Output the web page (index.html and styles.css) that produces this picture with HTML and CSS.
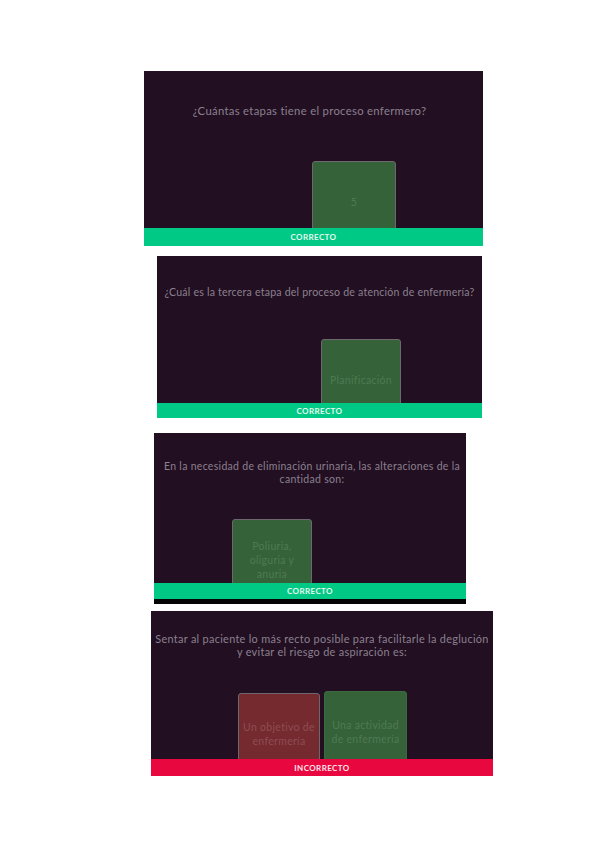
FILE: index.html
```html
<!DOCTYPE html>
<html lang="es">
<head>
<meta charset="utf-8">
<title>Quiz</title>
<link rel="stylesheet" href="styles.css">
</head>
<body>
<main class="page">
  <section class="slide s1">
    <div class="stage">
      <p class="question">¿Cuántas etapas tiene el proceso enfermero?</p>
      <div class="answers">
        <div class="answer ok framed">5</div>
      </div>
    </div>
    <div class="result ok-bar">CORRECTO</div>
  </section>

  <section class="slide s2">
    <div class="stage">
      <p class="question">¿Cuál es la tercera etapa del proceso de atención de enfermería?</p>
      <div class="answers">
        <div class="answer ok framed">Planificación</div>
      </div>
    </div>
    <div class="result ok-bar">CORRECTO</div>
  </section>

  <section class="slide s3">
    <div class="stage">
      <p class="question">En la necesidad de eliminación urinaria, las alteraciones de la<br>cantidad son:</p>
      <div class="answers">
        <div class="answer ok framed">Poliuria,<br>oliguria y<br>anuria</div>
      </div>
    </div>
    <div class="result ok-bar">CORRECTO</div>
    <div class="edge"></div>
  </section>

  <section class="slide s4">
    <div class="stage">
      <p class="question">Sentar al paciente lo más recto posible para facilitarle la deglución<br>y evitar el riesgo de aspiración es:</p>
      <div class="answers">
        <div class="answer bad framed">Un objetivo de<br>enfermería</div>
        <div class="answer ok">Una actividad<br>de enfermería</div>
      </div>
    </div>
    <div class="result bad-bar">INCORRECTO</div>
  </section>
</main>
</body>
</html>
```

FILE: styles.css
```css
* { box-sizing: border-box; }

html, body {
  margin: 0;
  padding: 0;
  background: #ffffff;
}

body {
  font-family: "Lato", "Open Sans", sans-serif;
}

.page {
  display: flex;
  flex-direction: column;
  padding-top: 71px;
}

.slide {
  display: flex;
  flex-direction: column;
  background: #220f21;
}

.stage {
  display: flex;
  flex-direction: column;
  overflow: hidden;
}

.question {
  margin: 0;
  text-align: center;
  white-space: nowrap;
  color: #8b8090;
  font-size: 11px;
  line-height: 13px;
  letter-spacing: 0.3px;
}

.answers {
  display: flex;
  align-items: flex-start;
  gap: 4px;
}

.answer {
  flex: none;
  height: 82px;
  display: flex;
  align-items: center;
  justify-content: center;
  text-align: center;
  white-space: nowrap;
  font-size: 10.5px;
  line-height: 14px;
  letter-spacing: 0.3px;
  border-radius: 3px;
  padding: 0;
}

.answer.ok {
  background: #356238;
  color: #4f7a53;
  border: 1px solid #3b6a3e;
}

.answer.bad {
  background: #742a2f;
  color: #8f4d52;
}

.answer.framed {
  border: 1.5px solid #6e676d;
}

.result {
  flex: none;
  display: flex;
  align-items: center;
  justify-content: center;
  color: #e8f8ef;
  font-weight: 700;
  font-size: 8px;
  letter-spacing: 0.4px;
}

.ok-bar { background: #00c986; }
.bad-bar { background: #e9073f; color: #fde6ec; }

.edge {
  height: 5px;
  background: #050505;
}

/* slide 1 */
.s1 { margin-left: 144px; width: 339px; }
.s1 .stage { height: 157px; padding-top: 33px; }
.s1 .question { font-size: 11.3px; padding-right: 8px; }
.s1 .answers { margin-top: 44px; padding-left: 168px; }
.s1 .answer { width: 84px; }
.s1 .result { height: 18px; }

/* slide 2 */
.s2 { margin-left: 157px; width: 325px; margin-top: 10px; }
.s2 .stage { height: 147px; padding-top: 30px; }
.s2 .question { font-size: 10.6px; letter-spacing: 0.2px; }
.s2 .answers { margin-top: 40px; padding-left: 164px; }
.s2 .answer { width: 80px; }
.s2 .result { height: 15px; }

/* slide 3 */
.s3 { margin-left: 154px; width: 312px; margin-top: 15px; }
.s3 .stage { height: 150px; padding-top: 27px; }
.s3 .question { font-size: 10.5px; letter-spacing: 0.3px; padding-left: 4px; }
.s3 .answers { margin-top: 33px; padding-left: 78px; }
.s3 .answer { width: 80px; }
.s3 .result { height: 16px; }

/* slide 4 */
.s4 { margin-left: 151px; width: 342px; margin-top: 7px; }
.s4 .stage { height: 148px; padding-top: 21px; }
.s4 .question { font-size: 10.9px; letter-spacing: 0.3px; }
.s4 .answers { margin-top: 33px; padding-left: 87px; }
.s4 .answer.bad { width: 82px; margin-top: 2px; }
.s4 .answer.ok { width: 83px; }
.s4 .result { height: 17px; }
```
